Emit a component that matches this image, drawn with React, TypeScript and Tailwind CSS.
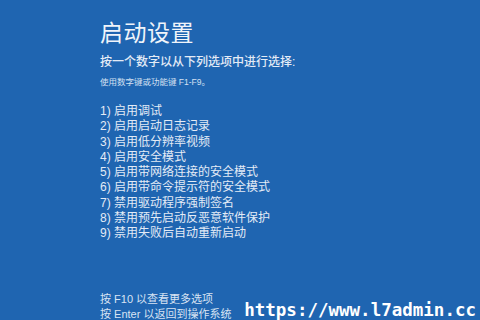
import React from 'react';

const options = [
  '启用调试',
  '启用启动日志记录',
  '启用低分辨率视频',
  '启用安全模式',
  '启用带网络连接的安全模式',
  '启用带命令提示符的安全模式',
  '禁用驱动程序强制签名',
  '禁用预先启动反恶意软件保护',
  '禁用失败后自动重新启动',
];

export default function App() {
  return (
    <div
      className="relative w-[480px] h-[320px] overflow-hidden bg-[#1f65b1] text-[#e3ebf6]"
      style={{ fontFamily: '"Liberation Sans", "Noto Sans CJK SC", sans-serif' }}
    >
      <div className="flex flex-col h-full pl-[100px] pt-[17px]">
        {/* Title */}
        <h1 className="text-[23px] leading-[32px] text-[#f0f4fa] tracking-[0.5px]">启动设置</h1>

        <p className="mt-[5px] text-[12px] leading-[16px] font-medium">按一个数字以从下列选项中进行选择:</p>
        <p className="mt-[6px] text-[8.5px] leading-[12px] text-[#d4e0f1]">使用数字键或功能键 F1-F9。</p>

        {/* Options */}
        <ul className="mt-[16px] flex flex-col">
          {options.map((o, i) => (
            <li key={i} className="text-[12px] leading-[15.25px]">
              {i + 1}) {o}
            </li>
          ))}
        </ul>

        {/* Footer */}
        <div className="mt-auto -mb-[2px] flex flex-col text-[11px] leading-[15px] text-[#d8e3f3]">
          <span>按 F10 以查看更多选项</span>
          <span>按 Enter 以返回到操作系统</span>
        </div>
      </div>

      {/* Watermark */}
      <div
        className="absolute right-[4px] bottom-[0px] text-[17.5px] leading-[20px] font-bold text-white"
        style={{ fontFamily: '"DejaVu Sans Mono", monospace' }}
      >
        https://www.l7admin.cc
      </div>
    </div>
  );
}
